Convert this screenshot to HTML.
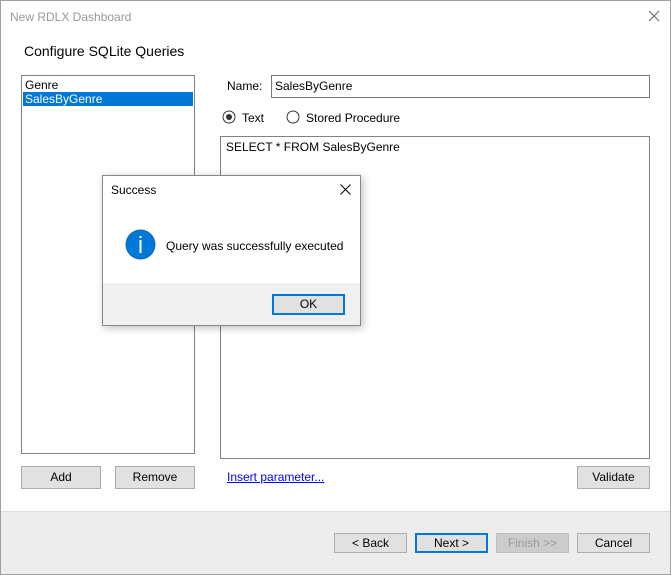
<!DOCTYPE html><html><head><style>
body{margin:0;width:671px;height:575px;position:relative;font-family:"Liberation Sans",sans-serif;font-size:12px;color:#000;background:#fff;overflow:hidden}
.a{position:absolute}
.btn{position:absolute;background:#e1e1e1;border:1px solid #adadad;box-sizing:border-box;text-align:center;line-height:21px;font-size:12px}
</style></head><body>
<div class="a" style="left:0;top:0;width:669px;height:573px;border:1px solid #a0a0a0"></div>
<div class="a" style="left:10px;top:10px;color:#999">New RDLX Dashboard</div>
<svg class="a" style="left:648px;top:10px" width="12" height="12"><path d="M1 1L11 11M11 1L1 11" stroke="#666" stroke-width="1"/></svg>
<div class="a" style="left:24px;top:43px;font-size:14px">Configure SQLite Queries</div>
<div class="a" style="left:21px;top:75px;width:172px;height:377px;border:1px solid #828282"></div>
<div class="a" style="left:25px;top:78px">Genre</div>
<div class="a" style="left:23px;top:92px;width:170px;height:14px;background:#0078d7;color:#fff;padding-left:2px;box-sizing:border-box;line-height:14px">SalesByGenre</div>
<div class="a" style="left:227px;top:79px">Name:</div>
<div class="a" style="left:271px;top:75px;width:379px;height:23px;box-sizing:border-box;border:1px solid #7a7a7a;padding-left:3px;line-height:21px">SalesByGenre</div>
<svg class="a" style="left:222px;top:110px" width="14" height="14"><circle cx="7" cy="7" r="6" fill="#fff" stroke="#333"/><circle cx="7" cy="7" r="3" fill="#333"/></svg>
<div class="a" style="left:242px;top:111px">Text</div>
<svg class="a" style="left:286px;top:110px" width="14" height="14"><circle cx="7" cy="7" r="6" fill="#fff" stroke="#333"/></svg>
<div class="a" style="left:306px;top:111px">Stored Procedure</div>
<div class="a" style="left:220px;top:136px;width:428px;height:321px;border:1px solid #828282"></div>
<div class="a" style="left:226px;top:140px">SELECT * FROM SalesByGenre</div>
<div class="btn" style="left:21px;top:466px;width:80px;height:23px">Add</div>
<div class="btn" style="left:115px;top:466px;width:80px;height:23px">Remove</div>
<div class="a" style="left:227px;top:470px;color:#0000ff;text-decoration:underline">Insert parameter...</div>
<div class="btn" style="left:577px;top:466px;width:73px;height:23px">Validate</div>
<div class="a" style="left:1px;top:511px;width:669px;height:62px;background:#ededed;border-top:1px solid #ddd"></div>
<div class="btn" style="left:334px;top:533px;width:73px;height:20px;line-height:18px">&lt; Back</div>
<div class="btn" style="left:415px;top:533px;width:73px;height:20px;line-height:16px;border:2px solid #0078d7">Next &gt;</div>
<div class="btn" style="left:496px;top:533px;width:73px;height:20px;line-height:18px;color:#999;background:#ccc;border-color:#bfbfbf">Finish &gt;&gt;</div>
<div class="btn" style="left:577px;top:533px;width:73px;height:20px;line-height:18px">Cancel</div>
<div class="a" style="left:102px;top:175px;width:257px;height:149px;border:1px solid #888;background:#fff;box-shadow:2px 2px 8px rgba(0,0,0,.25)">
<div class="a" style="left:8px;top:7px">Success</div>
<svg class="a" style="left:237px;top:8px" width="11" height="11"><path d="M0.5 0.5L10.5 10.5M10.5 0.5L0.5 10.5" stroke="#000"/></svg>
<svg class="a" style="left:22px;top:53px" width="31" height="31"><circle cx="15.5" cy="15.5" r="15" fill="#0a6fc6"/><circle cx="15.5" cy="15.5" r="13.5" fill="#0078d7"/><rect x="14.5" y="7" width="2" height="2" fill="#fff"/><rect x="14.5" y="11" width="2" height="13" fill="#fff"/></svg>
<div class="a" style="left:63px;top:63px">Query was successfully executed</div>
<div class="a" style="left:0;top:107px;width:257px;height:42px;background:#f0f0f0"></div>
<div class="btn" style="left:169px;top:118px;width:73px;height:21px;line-height:17px;border:2px solid #0078d7">OK</div>
</div>
</body></html>
